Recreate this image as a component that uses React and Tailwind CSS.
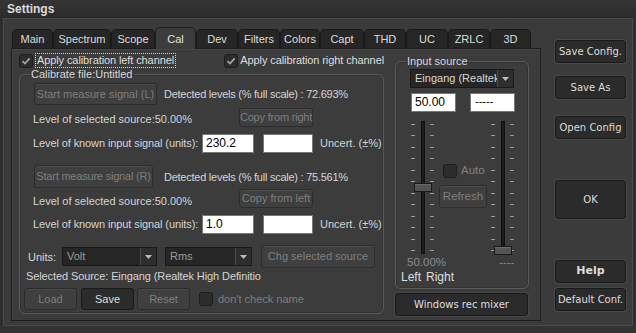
import React from "react";

const TABS = [
  ["Main", 41], ["Spectrum", 58], ["Scope", 44], ["Cal", 41], ["Dev", 42], ["Filters", 42],
  ["Colors", 40], ["Capt", 44], ["THD", 42], ["UC", 42], ["ZRLC", 42], ["3D", 41],
];

function Btn({ children, className = "", disabled }) {
  return (
    <button
      className={`flex items-center justify-center whitespace-nowrap rounded-[3px] border leading-none
        ${disabled
          ? "border-[#2c2c2c] bg-[#3f3f3f] text-[#7e7e7e] shadow-[inset_0_1px_0_#4a4a4a]"
          : "border-[#1a1a1a] bg-[#2b2b2b] text-[#dedede] shadow-[0_0_0_1px_#474747]"} ${className}`}
    >
      {children}
    </button>
  );
}

function SideBtn({ children, className = "" }) {
  return (
    <button
      className={`flex w-[71px] items-center justify-center whitespace-nowrap rounded-[3px] border border-[#1a1a1a] bg-[#2b2b2b] font-['DejaVu_Sans'] text-[10px] text-[#dcdcdc] shadow-[0_0_0_1px_#484848] ${className}`}
    >
      {children}
    </button>
  );
}

function Check({ checked, className = "" }) {
  return (
    <span className={`flex h-[14px] w-[14px] shrink-0 items-center justify-center rounded-[3px] border border-[#1e1e1e] bg-[#2c2c2c] ${className}`}>
      {checked && (
        <svg width="10" height="10" viewBox="0 0 10 10">
          <path d="M1.5 5.2 L4 7.6 L8.6 2.4" stroke="#a8a8a8" strokeWidth="1.6" fill="none" />
        </svg>
      )}
    </span>
  );
}

function Select({ value, className = "", light }) {
  return (
    <div className={`flex h-[19px] items-stretch border border-[#1a1a1a] bg-[#262626] ${className}`}>
      <span className={`flex-1 overflow-hidden whitespace-nowrap pl-[4px] leading-[17px] ${light ? "pl-[3px] text-[11px] text-[#d6d6d6]" : "text-[#9a9a9a]"}`}>{value}</span>
      <span className="flex w-[16px] shrink-0 items-center justify-center border-l border-[#4a4a4a] bg-[#2e2e2e]">
        <svg width="7" height="4" viewBox="0 0 7 4"><path d="M0 0 H7 L3.5 4 Z" fill="#bcbcbc" /></svg>
      </span>
    </div>
  );
}

function Field({ value, className = "" }) {
  return (
    <div className={`h-[19px] shrink-0 border border-[#777] bg-white pl-[3px] text-[12px] leading-[17px] text-black ${className}`}>
      {value}
    </div>
  );
}

function Slider({ thumb }) {
  const ticks = Array.from({ length: 12 });
  return (
    <div className="relative h-[136px] w-[23px] shrink-0">
      <div className="absolute left-0 top-[3px] flex h-[127px] flex-col justify-between">
        {ticks.map((_, i) => <span key={i} className="block h-px w-[4px] bg-[#9a9a9a]" />)}
      </div>
      <div className="absolute right-0 top-[3px] flex h-[127px] flex-col justify-between">
        {ticks.map((_, i) => <span key={i} className="block h-px w-[4px] bg-[#9a9a9a]" />)}
      </div>
      <div className="absolute left-[10px] top-0 h-[133px] w-[4px] border border-[#111] bg-[#1c1c1c]" />
      <div
        className="absolute left-[3px] h-[9px] w-[18px] border border-[#1a1a1a] bg-[#555] shadow-[inset_0_1px_0_#6a6a6a]"
        style={{ top: thumb }}
      />
    </div>
  );
}

export default function App() {
  return (
    <div className="flex h-[333px] w-[636px] flex-col overflow-hidden whitespace-nowrap bg-[#2e2e2e] font-['Liberation_Sans',Arial,sans-serif] text-[11px] text-[#d4d4d4]">
      {/* Title */}
      <div className="h-[18px] shrink-0 bg-gradient-to-b from-[#353535] to-[#2b2b2b] pl-[7px] text-[12px] font-bold leading-[18px] text-[#dadada]">
        Settings
      </div>

      {/* Window body */}
      <div className="mx-[3px] flex h-[308px] border border-[#4a4a4a] bg-[#3b3b3b]">
        <div className="ml-[7px] flex w-[530px] flex-col pt-[8px]">
          {/* Tabs */}
          <div className="flex h-[21px] items-end pl-[1px]">
            {TABS.map(([t, w]) =>
              t === "Cal" ? (
                <div key={t} style={{ width: w }} className="relative z-10 -mb-px flex h-[22px] items-start justify-center rounded-t-[5px] border border-b-0 border-[#1e1e1e] bg-[#3c3c3c] pt-[3px] text-[#e0e0e0]">
                  {t}
                </div>
              ) : (
                <div key={t} style={{ width: w }} className="flex h-[19px] items-center justify-center rounded-t-[5px] border border-b-0 border-[#1a1a1a] bg-[#262626] text-[#dcdcdc]">
                  {t}
                </div>
              )
            )}
          </div>

          {/* Panel */}
          <div className="flex h-[273px] border border-[#1e1e1e] bg-[#3c3c3c] pl-[7px] pt-[4px] shadow-[inset_1px_1px_0_#464646]">
            {/* Left column */}
            <div className="flex w-[365px] shrink-0 flex-col">
              <div className="flex h-[15px] items-center">
                <div className="flex w-[207px] items-center">
                  <Check checked />
                  <span className="ml-[2px] border border-dotted border-[#cfcfcf] px-[1px] leading-[13px] tracking-[-0.1px] text-[#dedede]">
                    Apply calibration left channel
                  </span>
                </div>
                <Check checked />
                <span className="ml-[2px] leading-[13px] tracking-[-0.1px] text-[#dedede]">Apply calibration right channel</span>
              </div>

              <fieldset className="h-[246px] rounded-[6px] border border-[#5a5a5a] shadow-[inset_0_0_0_1px_#333]">
                <legend className="ml-[10px] px-[1px] leading-[12px] text-[#d8d8d8]">Calibrate file:Untitled</legend>

                <div className="mt-[3px] flex h-[22px] items-center pl-[14px]">
                  <Btn disabled className="h-[22px] w-[123px]">Start measure signal (L)</Btn>
                  <span className="ml-[7px] pt-[1px] tracking-[-0.25px]">Detected levels (% full scale) : 72.693%</span>
                </div>

                <div className="mt-[3px] flex h-[19px] items-center pl-[13px]">
                  <span className="w-[206px] pt-[4px]">Level of selected source:50.00%</span>
                  <Btn disabled className="h-[19px] w-[74px] tracking-[-0.2px]">Copy from right</Btn>
                </div>

                <div className="mt-[7px] flex h-[19px] items-center pl-[13px]">
                  <span className="w-[169px] tracking-[-0.1px]">Level of known input signal (units):</span>
                  <Field value="230.2" className="w-[52px]" />
                  <Field value="" className="ml-[9px] w-[50px]" />
                  <span className="ml-[7px]">Uncert. (±%)</span>
                </div>

                <div className="mt-[12px] flex h-[23px] items-center pl-[14px]">
                  <Btn disabled className="h-[23px] w-[119px] tracking-[-0.2px]">Start measure signal (R)</Btn>
                  <span className="ml-[11px] pt-[1px] tracking-[-0.25px]">Detected levels (% full scale) : 75.561%</span>
                </div>

                <div className="mt-[1px] flex h-[19px] items-center pl-[13px]">
                  <span className="w-[206px] pt-[5px]">Level of selected source:50.00%</span>
                  <Btn disabled className="h-[19px] w-[74px]">Copy from left</Btn>
                </div>

                <div className="mt-[7px] flex h-[19px] items-center pl-[13px]">
                  <span className="w-[169px] tracking-[-0.1px]">Level of known input signal (units):</span>
                  <Field value="1.0" className="w-[52px]" />
                  <Field value="" className="ml-[9px] w-[50px]" />
                  <span className="ml-[7px]">Uncert. (±%)</span>
                </div>

                <div className="mt-[11px] flex h-[23px] items-center pl-[8px]">
                  <span className="w-[34px] pt-[2px]">Units:</span>
                  <Select value="Volt" className="w-[95px]" />
                  <Select value="Rms" className="ml-[8px] w-[87px]" />
                  <Btn disabled className="ml-[9px] h-[23px] w-[114px]">Chg selected source</Btn>
                </div>

                <div className="mt-[2px] h-[13px] pl-[6px] leading-[13px] tracking-[-0.1px]">
                  Selected Source: Eingang (Realtek High Definitio
                </div>

                <div className="mt-[5px] flex h-[22px] items-center pl-[4px]">
                  <Btn disabled className="h-[22px] w-[53px]">Load</Btn>
                  <Btn className="ml-[4px] h-[22px] w-[53px] shadow-none">Save</Btn>
                  <Btn disabled className="ml-[3px] h-[22px] w-[53px]">Reset</Btn>
                  <Check className="ml-[9px] h-[13px] w-[13px]" />
                  <span className="ml-[5px] text-[#7e7e7e]">don't check name</span>
                </div>
              </fieldset>
            </div>

            {/* Right column */}
            <div className="ml-[11px] flex w-[134px] shrink-0 flex-col">
              <fieldset className="mt-[2px] h-[234px] rounded-[6px] border border-[#5a5a5a] shadow-[inset_0_0_0_1px_#333]">
                <legend className="ml-[10px] px-[1px] leading-[12px] text-[#d8d8d8]">Input source</legend>
                <Select value="Eingang (Realtek High Definition Audio)" light className="ml-[14px] mt-[2px] w-[104px]" />
                <div className="mt-[5px] flex pl-[15px]">
                  <Field value="50.00" className="w-[45px]" />
                  <div className="ml-[14px] h-[19px] w-[45px] border border-[#777] bg-white pl-[4px] text-[11px] leading-[15px] text-black">-----</div>
                </div>

                <div className="mt-[9px] flex pl-[15px]">
                  <Slider thumb={62} />
                  <div className="ml-[5px] flex w-[48px] shrink-0 flex-col items-center">
                    <div className="mt-[41px] flex items-center self-start pl-[4px]">
                      <Check className="h-[14px] w-[14px]" />
                      <span className="ml-[4px] text-[11.5px] text-[#808080]">Auto</span>
                    </div>
                    <Btn disabled className="mt-[6px] h-[23px] w-[48px] text-[11.5px]">Refresh</Btn>
                  </div>
                  <div className="ml-[4px]">
                    <Slider thumb={125} />
                  </div>
                </div>

                <div className="flex h-[11px] items-center pl-[11px] text-[11.5px] leading-[11px] text-[#8a8a8a]">
                  <span className="w-[92px]">50.00%</span>
                  <span>----</span>
                </div>
                <div className="mt-[3px] flex pl-[5px] text-[12px] leading-[12px] text-[#dedede]">
                  <span>Left</span>
                  <span className="ml-[5px]">Right</span>
                </div>
              </fieldset>
              <Btn className="mt-[4px] h-[23px] w-[133px] font-['DejaVu_Sans'] text-[10px]">Windows rec mixer</Btn>
            </div>
          </div>
        </div>

        {/* Side buttons */}
        <div className="ml-[14px] flex flex-col pt-[21px]">
          <SideBtn className="h-[23px]">Save Config.</SideBtn>
          <SideBtn className="mt-[13px] h-[23px]">Save As</SideBtn>
          <SideBtn className="mt-[17px] h-[23px]">Open Config</SideBtn>
          <SideBtn className="mt-[41px] h-[39px]">OK</SideBtn>
          <SideBtn className="mt-[41px] h-[23px] text-[11px] font-bold">Help</SideBtn>
          <SideBtn className="mt-[5px] h-[23px]">Default Conf.</SideBtn>
        </div>
      </div>
      <div className="flex-1 bg-[#333]" />
    </div>
  );
}
